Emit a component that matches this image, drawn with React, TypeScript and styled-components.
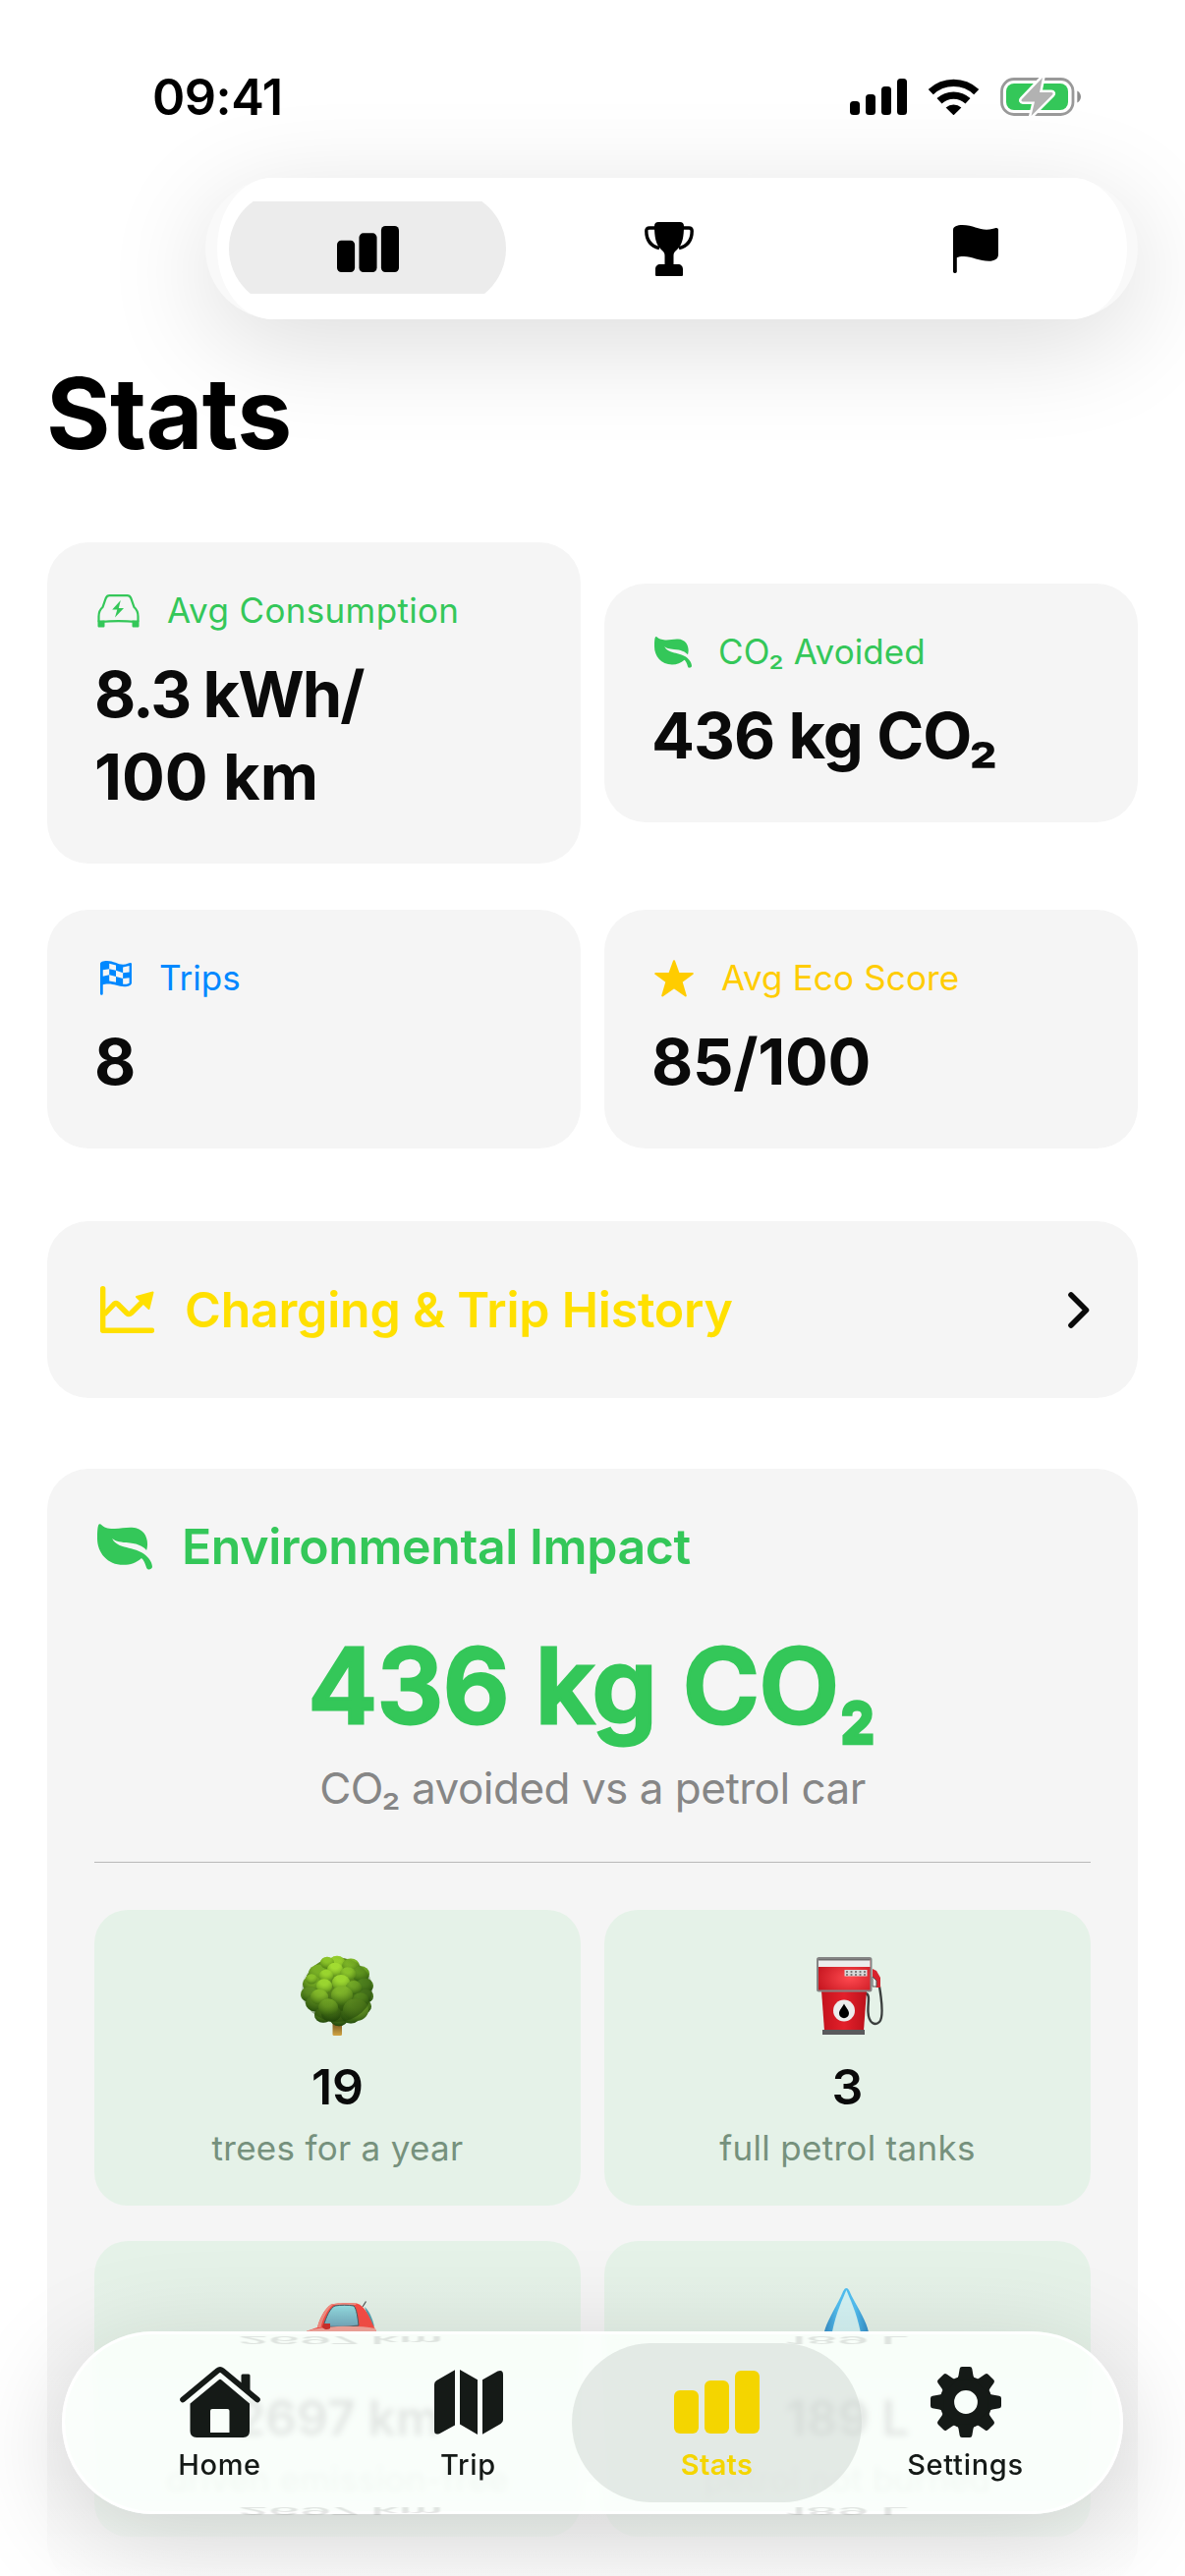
import React from "react";
import styled, { createGlobalStyle } from "styled-components";

const GREEN = "#34c759";
const BLUE = "#0088ff";
const AMBER = "#ffcc00";
const YELLOW = "#ffe000";

const GlobalStyle = createGlobalStyle`
  body {
    margin: 0;
    background: #fff;
    font-family: Inter, "Liberation Sans", sans-serif;
    color: #0a0a0a;
  }
`;

const Screen = styled.div`
  position: relative;
  width: 1206px;
  height: 2622px;
  overflow: hidden;
  background: #fff;
`;

const StatusBar = styled.header`
  display: flex;
  align-items: center;
  height: 196px;
  padding: 0 105px 0 155px;
  box-sizing: border-box;
`;

const Clock = styled.span`
  flex: 1;
  font-size: 50.5px;
  font-weight: 600;
  letter-spacing: -0.5px;
  color: #000;
`;

const StatusIcons = styled.div`
  display: flex;
  align-items: center;
  gap: 22px;
`;

const Segments = styled.nav`
  display: flex;
  width: 949px;
  height: 144px;
  margin: -15px 0 0 209px;
  border-radius: 72px;
  background: #f9f9f9;
  box-shadow: 0 24px 110px rgba(0, 0, 0, 0.14);
`;

const SegmentsFace = styled.div`
  display: flex;
  flex: 1;
  align-items: center;
  gap: 28px;
  margin: 0 12px;
  padding: 0 12px;
  border-radius: 56px / 72px;
  background: #fff;
`;

const Segment = styled.button<{ $selected?: boolean; $shift?: number }>`
  display: flex;
  align-items: center;
  justify-content: center;
  width: 282px;
  height: 118px;
  padding: 0 ${(p) => p.$shift ?? 0}px 0 0;
  box-sizing: border-box;
  border: 0;
  border-radius: 59px;
  clip-path: inset(11px 0 13px);
  background: ${(p) => (p.$selected ? "#ececec" : "transparent")};
`;

const Title = styled.h1`
  margin: 36px 0 71px 47px;
  font-size: 100px;
  line-height: 120px;
  font-weight: 700;
  letter-spacing: -0.6px;
  color: #000;
`;

const Content = styled.main`
  display: flex;
  flex-direction: column;
  padding: 0 48px;
`;

const StatGrid = styled.section`
  display: grid;
  grid-template-columns: 543px 543px;
  gap: 47px 24px;
  align-items: center;
`;

const Card = styled.div`
  border-radius: 42px;
  background: #f5f5f5;
`;

const StatCard = styled(Card)`
  padding: 48px 48px 46px;
`;

const StatLabel = styled.div<{ $color: string }>`
  display: flex;
  align-items: center;
  height: 43px;
  margin-bottom: 22px;
  font-size: 35px;
  line-height: 43px;
  color: ${(p) => p.$color};
`;

const StatIcon = styled.span<{ $width: number; $pad: number }>`
  display: flex;
  width: ${(p) => p.$width}px;
  padding-left: ${(p) => p.$pad}px;
  box-sizing: border-box;
`;

const LabelText = styled.span<{ $spacing: number }>`
  letter-spacing: ${(p) => p.$spacing}px;
`;

const StatValue = styled.div<{ $spacing: number }>`
  font-size: 65px;
  line-height: 84px;
  font-weight: 700;
  letter-spacing: ${(p) => p.$spacing}px;
`;

const HistoryCard = styled(Card)`
  display: flex;
  align-items: center;
  height: 180px;
  margin-top: 74px;
  padding: 0 49px 0 54px;
  box-sizing: border-box;
`;

const CardTitle = styled.h2<{ $color: string; $spacing: number }>`
  flex: 1;
  margin: 0;
  font-size: 50px;
  line-height: 62px;
  font-weight: 600;
  letter-spacing: ${(p) => p.$spacing}px;
  color: ${(p) => p.$color};
`;

const TitleIcon = styled.span<{ $width: number }>`
  display: flex;
  width: ${(p) => p.$width}px;
`;

const ImpactCard = styled(Card)`
  display: flex;
  flex-direction: column;
  margin-top: 72px;
  padding: 48px;
`;

const ImpactHeader = styled.div`
  display: flex;
  align-items: center;
  padding-left: 3px;
`;

const ImpactTotal = styled.div`
  margin-top: 46px;
  text-align: center;
  font-size: 106px;
  line-height: 130px;
  font-weight: 600;
  letter-spacing: -0.3px;
  color: ${GREEN};
  -webkit-text-stroke: 3px ${GREEN};
`;

const Subscript = styled.span`
  display: inline-block;
  margin-right: -9px;
  transform: translateY(5px) scaleX(0.78);
  transform-origin: 0 50%;
`;

const ImpactCaption = styled.div`
  margin-top: 12px;
  text-align: center;
  font-size: 44px;
  line-height: 54px;
  letter-spacing: -0.5px;
  color: #868686;
`;

const Divider = styled.hr`
  width: 100%;
  height: 1px;
  margin: 48px 0;
  border: 0;
  background: #b9b9b9;
`;

const TileGrid = styled.div`
  display: grid;
  grid-template-columns: 495px 495px;
  gap: 36px 24px;
`;

const Tile = styled.div`
  display: flex;
  flex-direction: column;
  align-items: center;
  height: 301px;
  padding-top: 36px;
  box-sizing: border-box;
  border-radius: 34px;
  background: #e5f2e8;
`;

const TileArt = styled.div`
  display: flex;
  align-items: center;
  justify-content: center;
  height: 102px;
  margin-bottom: 12px;
`;

const TileValue = styled.div`
  font-size: 50px;
  line-height: 60px;
  font-weight: 600;
`;

const TileLabel = styled.div`
  margin-top: 11px;
  font-size: 35px;
  line-height: 43px;
  letter-spacing: 0.3px;
  color: #76917d;
`;

const BottomFade = styled.div`
  position: absolute;
  left: 0;
  right: 0;
  bottom: 0;
  height: 340px;
  background: linear-gradient(
    rgba(255, 255, 255, 0),
    rgba(255, 255, 255, 0.05) 30%,
    rgba(255, 255, 255, 0.6) 85%,
    rgba(255, 255, 255, 0.9)
  );
`;

const TabBar = styled.nav`
  position: absolute;
  left: 63px;
  top: 2373px;
  display: grid;
  grid-template-columns: repeat(4, 253px);
  justify-content: center;
  align-items: center;
  width: 1080px;
  height: 186px;
  box-sizing: border-box;
  border: 3px solid #fff;
  border-radius: 93px;
  background: rgba(250, 255, 252, 0.86);
  backdrop-filter: blur(3px);
  box-shadow: 0 24px 110px rgba(0, 0, 0, 0.17);
`;

const Tab = styled.a<{ $selected?: boolean }>`
  display: flex;
  flex-direction: column;
  align-items: center;
  height: 162px;
  margin: 0 -21px;
  padding-top: 24px;
  box-sizing: border-box;
  border-radius: 81px;
  background: ${(p) => (p.$selected ? "rgba(205, 213, 208, 0.5)" : "transparent")};
  color: ${(p) => (p.$selected ? "#f4d500" : "#151a17")};
  font-size: 29px;
  line-height: 36px;
  font-weight: ${(p) => (p.$selected ? 600 : 500)};
  letter-spacing: ${(p) => (p.$selected ? 0.3 : 0.7)}px;
`;

const TabIcon = styled.span`
  display: flex;
  align-items: center;
  height: 72px;
  margin-bottom: 10px;
`;

const Refraction = styled.span<{ $left: number; $top: number; $height: number }>`
  position: absolute;
  left: ${(p) => p.$left}px;
  top: ${(p) => p.$top}px;
  font-size: 50px;
  line-height: 60px;
  font-weight: 600;
  color: rgba(0, 0, 0, 0.1);
  filter: blur(1px);
  transform-origin: 50% 0;
  transform: translateY(${(p) => p.$height}px) scaleY(-0.2);
`;

const Signal = () => (
  <svg width="58" height="37" viewBox="0 0 58 37">
    <rect x="0" y="23" width="10" height="14" rx="3.5" />
    <rect x="16" y="16" width="10" height="21" rx="3.5" />
    <rect x="32" y="8" width="10" height="29" rx="3.5" />
    <rect x="48" y="0" width="10" height="37" rx="3.5" />
  </svg>
);

const Wifi = () => (
  <svg width="51" height="37" viewBox="0 0 51 37" fill="none" stroke="#000" strokeWidth="7.4">
    <path d="M2.3 13.6A33.8 33.8 0 0 1 48.7 13.6" />
    <path d="M11 22.8A21.3 21.3 0 0 1 40 22.8" />
    <path d="M17.6 29.4A12.4 12.4 0 0 1 33.4 29.4L25.5 37.3Z" fill="#000" stroke="none" />
  </svg>
);

const Battery = () => (
  <svg width="83" height="41" viewBox="0 0 83 41">
    <rect x="1.5" y="2.5" width="72.5" height="36" rx="12.5" fill="none" stroke="#999" strokeWidth="2.8" />
    <rect x="6" y="7" width="63" height="27" rx="8" fill={GREEN} />
    <path d="M78.3 14.5C80.6 15.5 82 18 82 20.5S80.6 25.5 78.3 26.5Z" fill="#8c8c8c" />
    <path
      d="M43 1L22 23C21 24.2 21.500 25.500 23 25.500H35L31.500 40L53 18.500C54.200 17.300 53.500 16 52 16H40Z"
      fill="#b2b2b2"
      stroke="#fff"
      strokeWidth="5"
      strokeLinejoin="round"
      paintOrder="stroke"
    />
  </svg>
);

const Bars = ({ width, height }: { width: number; height: number }) => (
  <svg width={width} height={height} viewBox="0 0 87 64" preserveAspectRatio="none" fill="currentColor">
    <rect x="0" y="20" width="25" height="44" rx="6" />
    <rect x="31" y="10" width="25" height="54" rx="6" />
    <rect x="62" y="0" width="25" height="64" rx="6" />
  </svg>
);

const Trophy = () => (
  <svg width="50" height="55" viewBox="0 0 50 55" fill="#000">
    <path d="M14 0H36C38.500 0 40 1.500 40 4C40 15 38.500 22 34.500 26.500C31.500 29.500 29.500 31 29.500 34V43H34C37 43 39 45 39 48V53.500C39 54.500 38.500 55 37.500 55H12.500C11.500 55 11 54.500 11 53.500V48C11 45 13 43 16 43H20.500V34C20.500 31 18.500 29.500 15.500 26.500C11.500 22 10 15 10 4C10 1.500 11.500 0 14 0Z" />
    <path
      d="M11 6H5C2.800 6 1.800 7 1.800 9C1.800 18 6.500 24.500 15 26.700M39 6H45C47.200 6 48.200 7 48.200 9C48.200 18 43.500 24.500 35 26.700"
      fill="none"
      stroke="#000"
      strokeWidth="3.4"
    />
  </svg>
);

const Flag = () => (
  <svg width="46" height="49" viewBox="0 0 46 49" fill="#000">
    <path d="M0 5C0 1.500 4 0 9.500 0C20 0 26 4.800 34 4.800C38.500 4.800 41.500 3.400 43.500 3C45 2.700 46 3.500 46 5V30C46 34.500 42 36.800 36.500 36.800C27 36.800 19 32 11 32C7.500 32 5.500 32.500 3.800 33.300V47.300C3.800 49.600 0 49.600 0 47.300Z" />
  </svg>
);

const EvCar = () => (
  <svg width="43" height="34" viewBox="0 0 43 34" fill="none" stroke={GREEN} strokeWidth="2.2">
    <path d="M12.500 1.200H30.500C32.500 1.200 33.500 2 34.300 4L37.500 13C40.500 15.500 41.500 18.500 41.500 22.500V26.500C41.500 27.500 41 28 40 28C28 26.800 15 26.800 3 28C2 28 1.500 27.500 1.500 26.500V22.500C1.500 18.500 2.500 15.500 5.500 13L8.700 4C9.500 2 10.500 1.200 12.500 1.200Z" />
    <path d="M.5 26.500H7.500V32C7.500 33 7 33.500 6 33.500H2C1 33.500 .5 33 .5 32ZM35.500 26.500H42.500V32C42.500 33 42 33.500 41 33.500H37C36 33.500 35.500 33 35.500 32Z" fill={GREEN} stroke="none" />
    <path d="M23.800 6L15.200 15.500H20.300L18 23.500L27 14H21.800Z" fill={GREEN} stroke="none" />
  </svg>
);

const Leaf = ({ width, height }: { width: number; height: number }) => (
  <svg width={width} height={height} viewBox="0 0 38 32" preserveAspectRatio="none" fill={GREEN}>
    <path d="M1.200.3C.3 1 0 5 0 10C0 20 7 28.500 18 28.500C23 28.500 27 27 30.500 23.800C32 25 33 27 34 30.500C34.600 32.300 37.500 32 38 30C38 26 34.500 22 31 20C25 17 21.500 17 17 15.500C13 14 11 12 10.300 10C12 12 15 12.500 20 13C27 13.600 31 15 34 18.300C36 12 33.500 3 24 2.600C19 2.400 16 3.600 11 3.400C7 3.200 4.500 2.500 3 .8C2.400 0 1.700 0 1.200.3Z" />
  </svg>
);

const CheckeredFlag = () => (
  <svg width="32" height="35" viewBox="0 0 94 103">
    <path
      d="M0 9C0 3 8 0 20 0C40 0 52 11 68 11C80 11 86 6 91 6C93 6 94 7 94 9V66C94 73 84 77 72 77C54 77 42 69 24 69C16 69 12 70 8 71V98C8 104 0 104 0 98Z"
      fill={BLUE}
    />
    <path
      d="M27 8L47 13V29L27 24ZM68 19L87 15V34L68 36ZM8 27L27 24V42L8 46ZM47 29L68 36V53L47 47ZM27 42L47 47V64L27 60ZM68 53L87 51V67C82 70 76 70 68 70Z"
      fill="#f5f5f5"
    />
  </svg>
);

const Star = () => (
  <svg width="40" height="38" viewBox="0 0 40 38" fill={AMBER} stroke={AMBER} strokeWidth="2" strokeLinejoin="round">
    <path d="M20 1.200L24.700 14H38.800L27.600 22.300L31.800 36.500L20 28.100L8.200 36.500L12.400 22.300L1.200 14H15.300Z" />
  </svg>
);

const TrendChart = () => (
  <svg width="55" height="48" viewBox="0 0 55 48" fill="none" stroke={YELLOW} strokeWidth="5.4" strokeLinecap="round" strokeLinejoin="round">
    <path d="M2.700 2.700V45.200H52.500" />
    <path d="M4 29L14 18.500Q16 16.500 18 18.500L27 27.500Q29.300 29.800 31.500 27.500L45 14" strokeLinecap="butt" />
    <path d="M53.500 6.500L49.500 23L37 11Z" fill={YELLOW} strokeWidth="2" />
  </svg>
);

const Chevron = () => (
  <svg width="22" height="37" viewBox="0 0 22 37" fill="none" stroke="#0a0a0a" strokeWidth="5.6" strokeLinecap="round" strokeLinejoin="round">
    <path d="M3 3L18.500 18.500L3 34" />
  </svg>
);

const foliage: [number, number, number, string][] = [
  [38, 36, 33, "#3c6b12"], [20, 22, 11, "#5f9a1c"], [38, 10, 9, "#86c326"], [28, 9, 7, "#78b520"],
  [52, 13, 9, "#68a41e"], [62, 22, 9, "#4f8c1a"], [13, 34, 10, "#578f1a"], [10, 46, 9, "#43771a"],
  [16, 56, 10, "#3b6c16"], [66, 36, 9, "#37701a"], [67, 48, 8, "#2f6119"], [24, 70, 9, "#28520f"],
  [40, 74, 9, "#234a10"], [52, 70, 10, "#2c5a12"], [64, 60, 9, "#2c5a14"], [32, 68, 10, "#28520f"],
  [36, 17, 8, "#96d52c"], [27, 24, 7, "#8bcb28"], [49, 22, 8, "#76b324"], [42, 32, 9, "#8fce2b"],
  [25, 36, 8, "#8ccc2a"], [55, 38, 8, "#5c9620"], [12, 28, 6, "#74b023"], [20, 49, 9, "#6ea722"],
  [43, 47, 11, "#68a022"], [62, 52, 8, "#477f1c"], [29, 61, 10, "#5d931f"], [57, 64, 13, "#4b7c1d"],
];

const Tree = () => (
  <svg width="78" height="82" viewBox="0 0 78 82">
    <defs>
      <linearGradient id="trunk" x1="0" y1="0" x2="0" y2="1">
        <stop offset="0" stopColor="#4b3410" />
        <stop offset="1" stopColor="#d3a544" />
      </linearGradient>
      <radialGradient id="crown" cx=".4" cy=".3" r=".7">
        <stop offset=".4" stopColor="#1d4006" stopOpacity="0" />
        <stop offset="1" stopColor="#1d4006" stopOpacity=".5" />
      </radialGradient>
      <radialGradient id="tuft" cx=".5" cy=".2" r=".8">
        <stop offset=".3" stopColor="#c4f040" stopOpacity=".25" />
        <stop offset="1" stopColor="#183a05" stopOpacity=".45" />
      </radialGradient>
    </defs>
    <rect x="33.5" y="64" width="9.5" height="18" rx="1.5" fill="url(#trunk)" />
    <g transform="scale(1 .87)">
      {foliage.map(([x, y, r, c], i) => (
        <g key={i}>
          <circle cx={x} cy={y} r={r} fill={c} />
          <circle cx={x} cy={y} r={r} fill="url(#tuft)" />
        </g>
      ))}
    </g>
    <ellipse cx="38" cy="35" rx="36" ry="33" fill="url(#crown)" />
  </svg>
);

const Pump = () => (
  <svg width="74" height="79" viewBox="-5 0 74 79">
    <defs>
      <radialGradient id="pumpRed" cx=".6" cy=".6" r=".7">
        <stop offset="0" stopColor="#ff4a50" />
        <stop offset="1" stopColor="#c2121c" />
      </radialGradient>
      <linearGradient id="pumpBase" x1="0" x2="1">
        <stop offset="0" stopColor="#c3121c" />
        <stop offset=".5" stopColor="#e3202b" />
        <stop offset="1" stopColor="#bb111b" />
      </linearGradient>
    </defs>
    <path d="M50 37C55 38 52 46 52.500 56C53 68 60 70 64 66C68 62 66.500 45 64 30" fill="none" stroke="#3b3f3e" strokeWidth="2.4" />
    <path d="M57 12L61 14L65 21V31H61L57 27Z" fill="#d8232d" />
    <path d="M57 20V30H61V24Z" fill="#e8eeea" stroke="#555" strokeWidth="1" />
    <path d="M5 34H51L48 75H8Z" fill="url(#pumpBase)" />
    <rect x="6" y="74" width="43" height="5" fill="#5a5a5c" />
    <rect x="1" y="1" width="54.5" height="33.5" rx="1.5" fill="url(#pumpRed)" stroke="#858585" strokeWidth="2" />
    <rect x="2" y="2.5" width="52.5" height="7.5" fill="#ececec" />
    <rect x="2" y="2" width="52.5" height="1.5" fill="#6d6d6d" />
    <rect x="28.5" y="13" width="23" height="6.5" fill="#d9d9d9" />
    <path d="M31 14V19M35.500 14V19M40 14V19M44.500 14V19M49 14V19" stroke="#777" strokeWidth="1.8" strokeDasharray="2 1" />
    <ellipse cx="28" cy="54.5" rx="11" ry="11" fill="#ededed" />
    <path d="M28 47.500C30 51.500 33 54 33 57.200A5 5 0 0 1 23 57.200C23 54 26 51.500 28 47.500Z" />
  </svg>
);

const Car = () => (
  <svg width="76" height="52" viewBox="-5 0 76 52" overflow="visible">
    <defs>
      <linearGradient id="window" x1="0" y1="0" x2="0" y2="1">
        <stop offset="0" stopColor="#92dfe2" />
        <stop offset="1" stopColor="#6fa6bb" />
      </linearGradient>
    </defs>
    <path d="M58 6L61.500 .5" stroke="#555" strokeWidth="1.3" />
    <path d="M60 6C65 10 68 18 70 26L66 24Z" fill="#4f9fae" />
    <path d="M12 27C14 19 19 8 26 3.500C31 2 46 2 52 2.500C61 5 65 17 70 27L72 31H1C5 29 9 28 12 27Z" fill="#f9473f" />
    <path d="M26 3.500C31 2 46 2 52 2.500L51 4H28C22 9 17 19 15.500 27H12C14 19 19 8 26 3.500Z" fill="#f48b7f" />
    <path d="M18 26C21 16 25 7 30 5C36 4 43 4 49 5C52 8 53 17 54 25C42 26.500 30 26.500 18 26Z" fill="url(#window)" stroke="#3f5860" strokeWidth="1" />
    <path d="M1 30.500C18 26 50 24 71 28L72 31H1Z" fill="#f5a297" />
    <path d="M18 23H25V28C22 30 19 29 17 27Z" fill="#cc2924" />
  </svg>
);

const Drop = () => (
  <svg width="56" height="78" viewBox="0 0 52 78" preserveAspectRatio="none">
    <defs>
      <linearGradient id="dropEdge" x1="0" x2="1">
        <stop offset="0" stopColor="#2b87c4" />
        <stop offset=".3" stopColor="#4dbdf1" />
        <stop offset=".7" stopColor="#4dbdf1" />
        <stop offset="1" stopColor="#2b87c4" />
      </linearGradient>
    </defs>
    <path d="M24.500 0C26.500 0 27.500 3 29.500 8C36.500 22 43.500 34 45.500 45H3.500C6 34 13 22 19.500 8C21.500 3 22.500 0 24.500 0Z" fill="url(#dropEdge)" />
    <path d="M24.500 2C27.500 10 34 24 38 45H11C15 24 21.500 10 24.500 2Z" fill="#d3f3f4" />
  </svg>
);

const House = () => (
  <svg width="82" height="72" viewBox="0 0 82 72" fill="currentColor">
    <path d="M62.500 9C62.500 8 63.300 7.500 64.500 7.500H69.500C70.700 7.500 71.500 8 71.500 9V25L73 32L62.500 22Z" />
    <path d="M3 33.500L38.500 4Q41 2 43.500 4L79 33.500" fill="none" stroke="currentColor" strokeWidth="5.6" strokeLinecap="round" />
    <path fillRule="evenodd" d="M39.500 13.500Q41 12.200 42.500 13.500L71 37.500V65.500Q71 72 64.500 72H17Q10.500 72 10.500 65.500V37.500ZM33 43Q31 43 31 45V67H50.500V45Q50.500 43 48.500 43Z" />
  </svg>
);

const MapIcon = () => (
  <svg width="70" height="66" viewBox="0 0 70 66" fill="currentColor">
    <path d="M0 15Q0 12.300 2.300 11L21 .3V56.500L5.500 65Q0 67 0 62ZM26 0L44 10.300V66L26 55.500ZM49 10.300L64.500 1.500Q70 -.5 70 5V51Q70 53.500 67.700 55L49 65.700Z" />
  </svg>
);

const Gear = () => (
  <svg width="72" height="72" viewBox="0 0 72 72" fill="currentColor">
    <circle cx="36" cy="36" r="19.2" fill="none" stroke="currentColor" strokeWidth="14.6" />
    {[0, 45, 90, 135, 180, 225, 270, 315].map((a) => (
      <path key={a} transform={`rotate(${a} 36 36)`} d="M25.500 13.500Q28 12 28.500 9L29.700 2Q30 0 32 0H40Q42 0 42.300 2L43.500 9Q44 12 46.500 13.500Z" />
    ))}
  </svg>
);

type Stat = {
  icon: React.ReactNode;
  iconWidth: number;
  pad: number;
  label: string;
  spacing: number;
  color: string;
  lines: [string, number][];
};

const stats: Stat[] = [
  { icon: <EvCar />, iconWidth: 74, pad: 3, label: "Avg Consumption", spacing: 0.35, color: GREEN, lines: [["8.3 kWh/", -2], ["100 km", 0]] },
  { icon: <Leaf width={38} height={32} />, iconWidth: 68, pad: 3, label: "CO₂ Avoided", spacing: 0.1, color: GREEN, lines: [["436 kg CO₂", -1]] },
  { icon: <CheckeredFlag />, iconWidth: 66, pad: 6, label: "Trips", spacing: 0, color: BLUE, lines: [["8", -1]] },
  { icon: <Star />, iconWidth: 71, pad: 3, label: "Avg Eco Score", spacing: 0.15, color: AMBER, lines: [["85/100", -0.3]] },
];

const tiles = [
  { art: <Tree />, value: "19", label: "trees for a year" },
  { art: <Pump />, value: "3", label: "full petrol tanks" },
  { art: <Car />, value: "2697 km", label: "driven emission-free" },
  { art: <Drop />, value: "189 L", label: "petrol not burned" },
];

const tabs = [
  { icon: <House />, label: "Home" },
  { icon: <MapIcon />, label: "Trip" },
  { icon: <Bars width={87} height={64} />, label: "Stats", selected: true },
  { icon: <Gear />, label: "Settings" },
];

export default function App() {
  return (
    <>
      <GlobalStyle />
      <Screen>
        <StatusBar>
          <Clock>09:41</Clock>
          <StatusIcons>
            <Signal />
            <Wifi />
            <Battery />
          </StatusIcons>
        </StatusBar>
        <Segments>
          <SegmentsFace>
            <Segment $selected>
              <Bars width={63} height={47} />
            </Segment>
            <Segment $shift={6}>
              <Trophy />
            </Segment>
            <Segment $shift={3}>
              <Flag />
            </Segment>
          </SegmentsFace>
        </Segments>
        <Title>Stats</Title>
        <Content>
          <StatGrid>
            {stats.map((s) => (
              <StatCard key={s.label}>
                <StatLabel $color={s.color}>
                  <StatIcon $width={s.iconWidth} $pad={s.pad}>
                    {s.icon}
                  </StatIcon>
                  <LabelText $spacing={s.spacing}>{s.label}</LabelText>
                </StatLabel>
                {s.lines.map(([text, spacing]) => (
                  <StatValue key={text} $spacing={spacing}>
                    {text}
                  </StatValue>
                ))}
              </StatCard>
            ))}
          </StatGrid>
          <HistoryCard>
            <TitleIcon $width={86}>
              <TrendChart />
            </TitleIcon>
            <CardTitle $color={YELLOW} $spacing={-0.2}>Charging &amp; Trip History</CardTitle>
            <Chevron />
          </HistoryCard>
          <ImpactCard>
            <ImpactHeader>
              <TitleIcon $width={86}>
                <Leaf width={56} height={47} />
              </TitleIcon>
              <CardTitle $color={GREEN} $spacing={-0.4}>Environmental Impact</CardTitle>
            </ImpactHeader>
            <ImpactTotal>
              436 kg CO<Subscript>₂</Subscript>
            </ImpactTotal>
            <ImpactCaption>CO₂ avoided vs a petrol car</ImpactCaption>
            <Divider />
            <TileGrid>
              {tiles.map((t) => (
                <Tile key={t.label}>
                  <TileArt>{t.art}</TileArt>
                  <TileValue>{t.value}</TileValue>
                  <TileLabel>{t.label}</TileLabel>
                </Tile>
              ))}
            </TileGrid>
          </ImpactCard>
        </Content>
        <BottomFade />
        <TabBar>
          <Refraction aria-hidden $left={176} $top={0} $height={12}>2697 km</Refraction>
          <Refraction aria-hidden $left={733} $top={0} $height={12}>189 L</Refraction>
          <Refraction aria-hidden $left={176} $top={170} $height={16}>2697 km</Refraction>
          <Refraction aria-hidden $left={733} $top={170} $height={16}>189 L</Refraction>
          {tabs.map((t) => (
            <Tab key={t.label} $selected={t.selected}>
              <TabIcon>{t.icon}</TabIcon>
              {t.label}
            </Tab>
          ))}
        </TabBar>
      </Screen>
    </>
  );
}
